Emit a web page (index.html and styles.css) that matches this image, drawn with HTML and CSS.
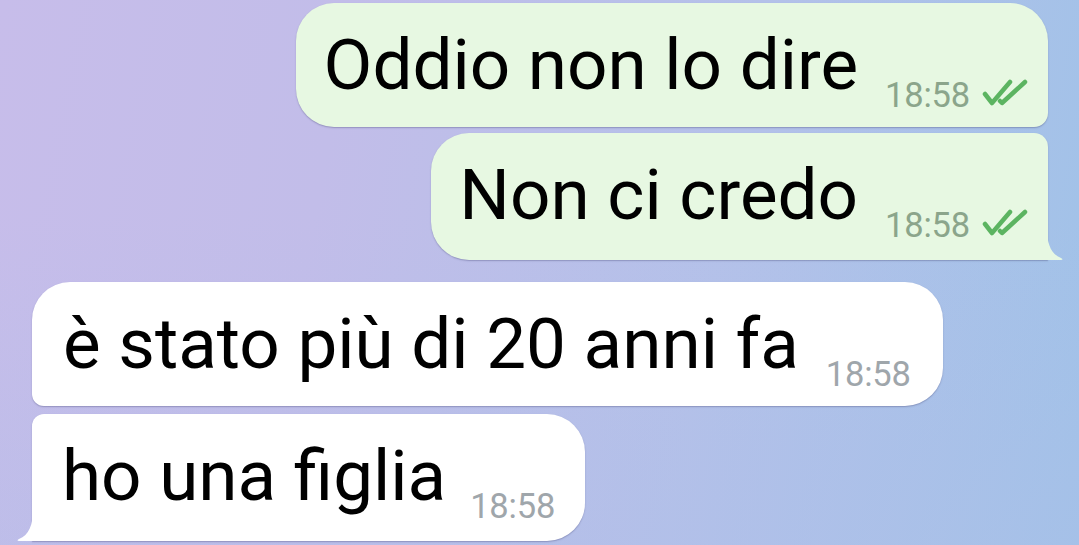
FILE: index.html
```html
<!DOCTYPE html>
<html lang="it">
<head>
<meta charset="utf-8">
<title>Chat</title>
<link rel="stylesheet" href="styles.css">
</head>
<body>
<div class="chat">
  <div class="bubble out first">
    <span class="text">Oddio non lo dire</span>
    <span class="meta"><span class="time">18:58</span>
      <svg class="check" viewBox="0 0 46 28" width="46" height="28"><path d="M3 15 L10 24 L28 3" /><path d="M18 22 L20 24 L43 3" /></svg>
    </span>
  </div>
  <div class="bubble out last">
    <span class="text">Non ci credo</span>
    <span class="meta"><span class="time">18:58</span>
      <svg class="check" viewBox="0 0 46 28" width="46" height="28"><path d="M3 15 L10 24 L28 3" /><path d="M18 22 L20 24 L43 3" /></svg>
    </span>
    <svg class="tail tail-out" viewBox="0 0 17 32" width="17" height="32"><path d="M0 0 C0 16 4 26 14 30 Q17 31.5 14 32 L0 32 Z"/></svg>
  </div>
  <div class="bubble in first">
    <span class="text">è stato più di 20 anni fa</span>
    <span class="meta"><span class="time">18:58</span></span>
  </div>
  <div class="bubble in last">
    <span class="text">ho una figlia</span>
    <span class="meta"><span class="time">18:58</span></span>
    <svg class="tail tail-in" viewBox="0 0 17 32" width="17" height="32"><path d="M17 0 C17 16 13 26 3 30 Q0 31.5 3 32 L17 32 Z"/></svg>
  </div>
</div>
</body>
</html>
```

FILE: styles.css
```css
html, body {
  margin: 0;
  padding: 0;
  height: 100%;
}
body {
  width: 1079px;
  height: 545px;
  overflow: hidden;
  font-family: Roboto, "Liberation Sans", sans-serif;
  background:
    linear-gradient(180deg, rgba(200,190,235,0) 40%, rgba(175,190,232,0.35) 100%),
    linear-gradient(100deg, #c7bdea 0%, #c2bde9 30%, #b4c1e9 65%, #a0c2e8 100%);
}
.chat {
  display: flex;
  flex-direction: column;
  padding: 3px 31px 0 32px;
}
.bubble {
  position: relative;
  display: flex;
  align-items: flex-end;
  box-sizing: border-box;
  padding: 20px 20px 20px 28px;
  border-radius: 38px;
  box-shadow: 0 1px 1.5px rgba(60, 60, 110, 0.35);
}
.bubble .text {
  font-size: 71px;
  line-height: 84px;
  color: #000;
  white-space: nowrap;
}
.bubble .meta {
  display: flex;
  align-items: center;
  margin-left: 27px;
  margin-bottom: -5px;
}
.time {
  font-size: 34.5px;
  line-height: 33px;
  letter-spacing: -0.2px;
}
.check {
  margin-left: 12px;
  margin-top: -5px;
  fill: none;
  stroke: #5cb461;
  stroke-width: 4.5;
  stroke-linecap: round;
  stroke-linejoin: round;
}
.out {
  align-self: flex-end;
  background: #e7f8e2;
}
.out .time {
  color: #8ba58b;
}
.out.first {
  border-bottom-right-radius: 14px;
}
.out.last {
  margin-top: 6px;
  border-top-right-radius: 14px;
  border-bottom-right-radius: 0;
  padding-bottom: 23px;
  padding-left: 28px;
}
.in {
  align-self: flex-start;
  background: #ffffff;
  padding-right: 32px;
}
.in .time {
  color: #9fa6ab;
}
.in.first {
  margin-top: 22px;
  border-bottom-left-radius: 12px;
  padding-left: 31px;
}
.in.last {
  margin-top: 8px;
  border-top-left-radius: 12px;
  border-bottom-left-radius: 0;
  padding-bottom: 23px;
  padding-right: 30px;
  padding-left: 30px;
}
.in.last .meta {
  margin-left: 24px;
}
.tail {
  position: absolute;
  bottom: 0;
}
.tail-out {
  right: -16px;
  fill: #e7f8e2;
}
.tail-in {
  left: -16px;
  fill: #ffffff;
}
```
